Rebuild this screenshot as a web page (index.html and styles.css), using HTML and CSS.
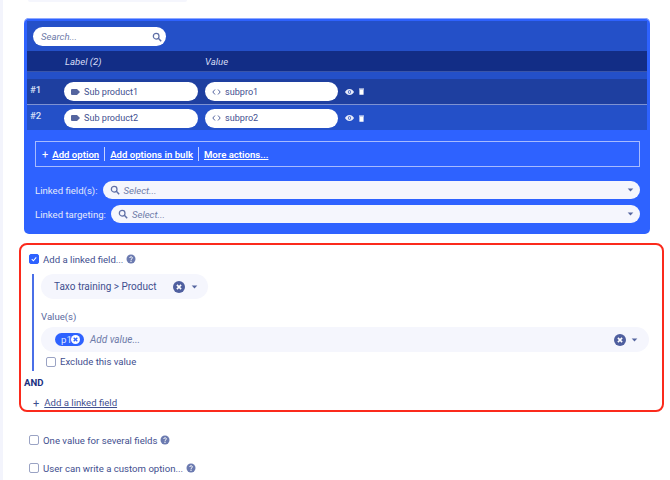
FILE: index.html
```html
<!DOCTYPE html>
<html lang="en">
<head>
<meta charset="utf-8">
<title>Linked field options</title>
<link rel="stylesheet" href="styles.css">
</head>
<body>
<svg class="defs" width="0" height="0" aria-hidden="true">
  <symbol id="search" viewBox="0 0 12 12"><circle cx="5" cy="5" r="3.4" fill="none" stroke="currentColor" stroke-width="1.5"/><path d="M7.6 7.6 11 11" stroke="currentColor" stroke-width="1.8" fill="none"/></symbol>
  <symbol id="caret" viewBox="0 0 8 5"><path d="M0.5 0.5h7L4 4.5z" fill="currentColor"/></symbol>
  <symbol id="clear" viewBox="0 0 12 12"><circle cx="6" cy="6" r="6" fill="currentColor"/><path d="M3.9 3.9 8.1 8.1M8.1 3.900 3.9 8.1" stroke="#fff" stroke-width="1.6"/></symbol>
  <symbol id="chipclear" viewBox="0 0 12 12"><circle cx="6" cy="6" r="6" fill="#fff"/><path d="M3.6 3.6 8.4 8.4M8.4 3.600 3.6 8.4" stroke="#2e62ff" stroke-width="1.800"/></symbol>
  <symbol id="help" viewBox="0 0 12 12"><circle cx="6" cy="6" r="5.400" fill="currentColor"/><path d="M4.4 4.800C4.400 2.900 7.700 2.900 7.700 4.700 7.700 5.900 6 5.800 6 7.100" stroke="#fff" stroke-width="1.200" fill="none"/><circle cx="6" cy="8.700" r=".8" fill="#fff"/></symbol>
  <symbol id="eye" viewBox="0 0 12 8"><path d="M6 0C3 0 1 2 0 4c1 2 3 4 6 4s5-2 6-4c-1-2-3-4-6-4z" fill="currentColor"/><circle cx="6" cy="4" r="2.200" fill="#3559c0"/><circle cx="6" cy="4" r="1.200" fill="currentColor"/></symbol>
  <symbol id="trash" viewBox="0 0 6 8"><path d="M0 .5h6v1H0zM.5 2h5v6h-5z" fill="currentColor"/></symbol>
  <symbol id="tag" viewBox="0 0 9 6"><path d="M1 0h5l3 3-3 3H1a1 1 0 0 1-1-1V1a1 1 0 0 1 1-1z" fill="currentColor"/></symbol>
  <symbol id="code" viewBox="0 0 9 6"><path d="M3 .5.8 3 3 5.500M6 .5 8.200 3 6 5.500" fill="none" stroke="currentColor" stroke-width="1"/></symbol>
</svg>

<div class="strip"></div>
<main class="page">
  <div class="top-pill"></div>

  <section class="panel">
    <div class="panel-dark">
      <div class="search-row">
        <div class="search">
          <span>Search...</span>
          <svg class="i-search"><use href="#search"/></svg>
        </div>
      </div>
      <div class="head">
        <span class="col-label">Label (2)</span>
        <span class="col-value">Value</span>
      </div>
      <div class="row row-odd">
        <span class="num">#1</span>
        <div class="cell cell-label"><svg class="i-tag"><use href="#tag"/></svg>Sub product1</div>
        <div class="cell cell-value"><svg class="i-tag"><use href="#code"/></svg>subpro1</div>
        <svg class="i-eye"><use href="#eye"/></svg>
        <svg class="i-trash"><use href="#trash"/></svg>
      </div>
      <div class="row row-even">
        <span class="num">#2</span>
        <div class="cell cell-label"><svg class="i-tag"><use href="#tag"/></svg>Sub product2</div>
        <div class="cell cell-value"><svg class="i-tag"><use href="#code"/></svg>subpro2</div>
        <svg class="i-eye"><use href="#eye"/></svg>
        <svg class="i-trash"><use href="#trash"/></svg>
      </div>
    </div>

    <div class="panel-body">
      <div class="actions">
        <span class="plus">+</span>
        <a class="act">Add option</a>
        <span class="sep"></span>
        <a class="act">Add options in bulk</a>
        <span class="sep"></span>
        <a class="act">More actions...</a>
      </div>
      <div class="link-row link-row-first">
        <label>Linked field(s):</label>
        <div class="select">
          <svg class="i-search"><use href="#search"/></svg>
          <span>Select...</span>
          <svg class="i-caret"><use href="#caret"/></svg>
        </div>
      </div>
      <div class="link-row">
        <label>Linked targeting:</label>
        <div class="select">
          <svg class="i-search"><use href="#search"/></svg>
          <span>Select...</span>
          <svg class="i-caret"><use href="#caret"/></svg>
        </div>
      </div>
    </div>
  </section>

  <section class="red">
    <div class="check-line">
      <span class="box box-on"><svg viewBox="0 0 10 10"><path d="M2.200 5.200 4.200 7.200 7.800 3" fill="none" stroke="#fff" stroke-width="1.300"/></svg></span>
      <span>Add a linked field...</span>
      <svg class="i-help"><use href="#help"/></svg>
    </div>
    <div class="linked">
      <div class="field-pill">
        <span>Taxo training &gt; Product</span>
        <svg class="i-clear"><use href="#clear"/></svg>
        <svg class="i-caret"><use href="#caret"/></svg>
      </div>
      <div class="values-label">Value(s)</div>
      <div class="values">
        <span class="chip">p1<svg class="i-chip"><use href="#chipclear"/></svg></span>
        <span class="placeholder">Add value...</span>
        <svg class="i-clear"><use href="#clear"/></svg>
        <svg class="i-caret"><use href="#caret"/></svg>
      </div>
      <div class="exclude">
        <span class="box"></span>
        <span>Exclude this value</span>
      </div>
    </div>
    <div class="and">AND</div>
    <div class="add-linked"><span class="plus-dark">+</span><a>Add a linked field</a></div>
  </section>

  <div class="check-line opt opt-first">
    <span class="box"></span>
    <span>One value for several fields</span>
    <svg class="i-help"><use href="#help"/></svg>
  </div>
  <div class="check-line opt">
    <span class="box"></span>
    <span>User can write a custom option...</span>
    <svg class="i-help"><use href="#help"/></svg>
  </div>
</main>
</body>
</html>
```

FILE: styles.css
```css
* { box-sizing: border-box; }
html, body { margin: 0; padding: 0; height: 480px; overflow: hidden; background: #fff; }
body {
  font-family: Roboto, "Noto Sans", sans-serif;
  font-size: 9.6px;
  color: #3f4f8f;
  display: flex;
}
.defs { position: absolute; }
.strip { width: 3px; height: 480px; background: #f3f4fc; flex: none; }
.page { width: 667px; flex: none; padding-left: 16px; }

.top-pill {
  margin-left: 9px; width: 159px; height: 2px;
  background: #f5f6fd; border-radius: 0 0 8px 8px;
}

.panel {
  margin: 16px 0 0 5px; width: 626px; height: 216px;
  background: #2e62ff; border-radius: 5px;
  padding-top: 3px; display: flex; flex-direction: column;
  box-shadow: inset 0 1px 0 #8fa9ff;
}
.panel-dark { margin: 0 3px; background: #2450c8; height: 109px; }
.search-row { height: 30px; padding: 6px 0 0 6px; }
.search {
  width: 133px; height: 19px; background: #fff; border-radius: 10px;
  display: flex; align-items: center; justify-content: space-between;
  padding: 0 4px 0 8px; font-style: italic; color: #6d7aa8;
}
.i-search { width: 10px; height: 10px; color: #5f6fa6; flex: none; }
.head {
  height: 21px; background: #122d86; color: #d5dcf5; font-style: italic;
  border-bottom: 1px solid #3a55a8; display: flex; align-items: center;
}
.col-label { margin-left: 38px; width: 140px; }
.row { display: flex; align-items: center; padding-left: 3px; position: relative; }
.row-odd { margin-top: 7px; height: 26px; background: #1e3fa0; border-bottom: 1px solid #7e92d2; }
.row-even { height: 26px; }
.num { width: 34px; color: #dbe1f7; font-weight: 500; margin-top: -5px; }
.cell {
  height: 19px; background: #fff; border-radius: 10px; color: #3f4f8f;
  display: flex; align-items: center; padding-left: 7px; gap: 4px; font-size: 9.1px;
}
.cell-label { width: 134px; margin-right: 7px; }
.cell-value { width: 133px; margin-right: 7px; }
.i-tag { width: 9px; height: 6px; color: #55659f; flex: none; }
.i-eye { width: 9px; height: 6px; color: #e8ecfa; flex: none; }
.i-trash { width: 5px; height: 7px; color: #fff; margin-left: 5px; flex: none; }

.panel-body { padding: 11px 10px 0 11px; flex: 1; color: #e4e9fb; }
.actions {
  height: 26px; border: 1px solid #a7bbff; display: flex; align-items: center;
  padding-left: 6px; color: #fff; font-weight: 600;
}
.plus { font-weight: 400; margin-right: 4px; font-size: 11px; }
.act { text-decoration: underline; }
.sep { width: 1px; height: 14px; background: #c5d2ff; margin: 0 5px; }
.link-row { display: flex; align-items: center; margin-top: 6px; gap: 5px; }
.link-row-first { margin-top: 14px; }
.link-row label { white-space: nowrap; }
.select {
  flex: 1; height: 18px; background: #f5f6fd; border-radius: 9px;
  display: flex; align-items: center; padding: 0 6px 0 7px;
  font-style: italic; color: #6d7aa8;
}
.select span { flex: 1; margin-left: 4px; }
.i-caret { width: 7px; height: 4px; color: #55659f; flex: none; }

.red {
  margin-top: 9px; width: 645px; height: 169px;
  border: 2px solid #fb2a1c; border-radius: 8px;
  padding: 8px 0 0 3px;
}
.check-line { display: flex; align-items: center; gap: 4px; height: 12px; }
.red > .check-line { margin-left: 5px; }
.box {
  width: 10px; height: 10px; border: 1px solid #9aa3c4; border-radius: 2px;
  background: #fff; flex: none; display: block;
}
.box-on { background: #2e62ff; border-color: #2e62ff; }
.box-on svg { display: block; width: 8px; height: 8px; }
.i-help { width: 10px; height: 10px; color: #6b7ab0; flex: none; margin-left: -1px; }
.linked {
  margin: 9px 0 0 8px; border-left: 2px solid #4a6fe8; padding-left: 7px; height: 97px;
}
.field-pill {
  width: 167px; height: 25px; background: #f5f6fd; border-radius: 13px;
  display: flex; align-items: center; padding: 0 10px 0 13px; color: #3f4f8f; font-size: 10px;
}
.field-pill span { flex: 1; }
.i-clear { width: 12px; height: 12px; color: #4f5f9f; flex: none; margin-right: 6px; }
.values-label { margin-top: 12px; height: 15px; color: #5a6aa0; }
.values {
  margin-top: 1px; width: 608px; height: 25px; background: #f5f6fd; border-radius: 13px;
  display: flex; align-items: center; padding: 0 11px 0 14px;
}
.values .i-clear { margin-right: 5px; }
.chip {
  background: #2e62ff; color: #dfe6ff; border-radius: 7px; height: 13px; width: 29px;
  display: flex; align-items: center; padding-left: 6px; gap: 0; flex: none;
}
.i-chip { width: 9px; height: 9px; margin-left: -1px; }
.placeholder { flex: 1; margin-left: 6px; font-style: italic; color: #6d7aa8; font-size: 10px; }
.exclude { display: flex; align-items: center; gap: 4px; margin: 4px 0 0 5px; }
.and { font-weight: 700; color: #1a2f80; margin-top: 6px; height: 14px; }
.add-linked { margin: 6px 0 0 9px; display: flex; gap: 5px; }
.add-linked a { text-decoration: underline; }
.plus-dark { font-size: 11px; line-height: 13px; }

.opt { margin-left: 10px; }
.opt-first { margin-top: 22px; }
.opt + .opt { margin-top: 16px; }
```
